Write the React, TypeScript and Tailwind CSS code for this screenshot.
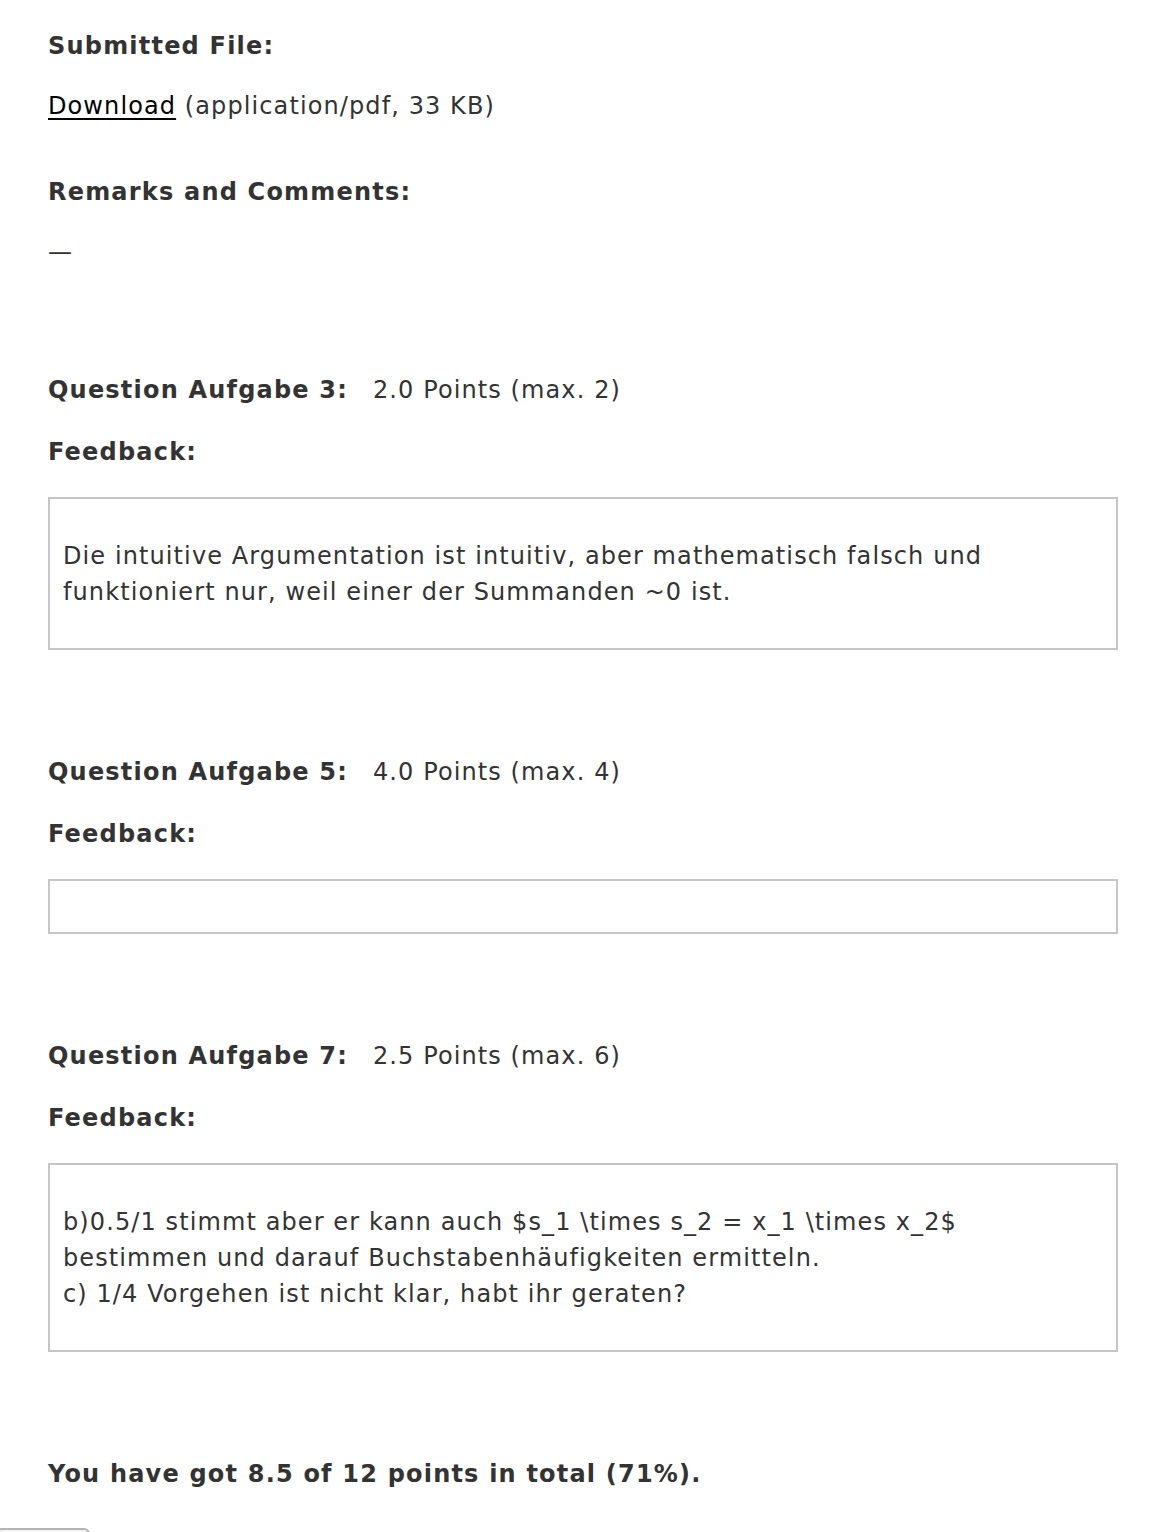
import React from "react";

const font = { fontFamily: '"DejaVu Sans", Verdana, sans-serif' };

function QuestionRow({ label, points }: { label: string; points: string }) {
  return (
    <div className="flex h-[36px] items-center leading-[36px]">
      <span className="w-[325px] shrink-0 font-bold tracking-[1.2px]">{label}</span>
      <span>{points}</span>
    </div>
  );
}

function FeedbackLabel() {
  return (
    <div className="mt-[26px] h-[36px] font-bold leading-[36px] tracking-[1.2px]">Feedback:</div>
  );
}

export default function App() {
  return (
    <div
      className="min-h-[1532px] w-[1156px] bg-white pl-[48px] pr-[38px] pt-[28px] text-[24px] tracking-[1.1px] text-[#333333]"
      style={font}
    >
      <div className="h-[36px] font-bold leading-[36px] tracking-[1.2px]">Submitted File:</div>
      <div className="mt-[24px] h-[36px] leading-[36px]">
        <a href="#" className="text-black underline underline-offset-[4px]">
          Download
        </a>{" "}
        (application/pdf, 33 KB)
      </div>
      <div className="mt-[50px] h-[36px] font-bold leading-[36px] tracking-[1.2px]">
        Remarks and Comments:
      </div>
      <div className="mt-[24px] h-[36px] leading-[36px]">—</div>

      <div className="mt-[102px]">
        <QuestionRow label="Question Aufgabe 3:" points="2.0 Points (max. 2)" />
      </div>
      <FeedbackLabel />
      <div className="mt-[27px] h-[153px] border-2 border-[#c6c6c6] px-[13px] pt-[39px] leading-[36px]">
        Die intuitive Argumentation ist intuitiv, aber mathematisch falsch und
        <br />
        funktioniert nur, weil einer der Summanden ~0 ist.
      </div>

      <div className="mt-[104px]">
        <QuestionRow label="Question Aufgabe 5:" points="4.0 Points (max. 4)" />
      </div>
      <FeedbackLabel />
      <div className="mt-[27px] h-[55px] border-2 border-[#c6c6c6]"></div>

      <div className="mt-[104px]">
        <QuestionRow label="Question Aufgabe 7:" points="2.5 Points (max. 6)" />
      </div>
      <FeedbackLabel />
      <div className="mt-[27px] h-[189px] border-2 border-[#c6c6c6] px-[13px] pt-[39px] leading-[36px]">
        b)0.5/1 stimmt aber er kann auch $s_1 \times s_2 = x_1 \times x_2$
        <br />
        bestimmen und darauf Buchstabenhäufigkeiten ermitteln.
        <br />
        c) 1/4 Vorgehen ist nicht klar, habt ihr geraten?
      </div>

      <div className="mt-[104px] h-[36px] font-bold leading-[36px] tracking-[1.2px]">
        You have got 8.5 of 12 points in total (71%).
      </div>
      <div className="-ml-[52px] mt-[36px] h-[20px] w-[94px] rounded-[6px] border-2 border-[#b4b4b4] bg-[#f4f4f4]"></div>
    </div>
  );
}
